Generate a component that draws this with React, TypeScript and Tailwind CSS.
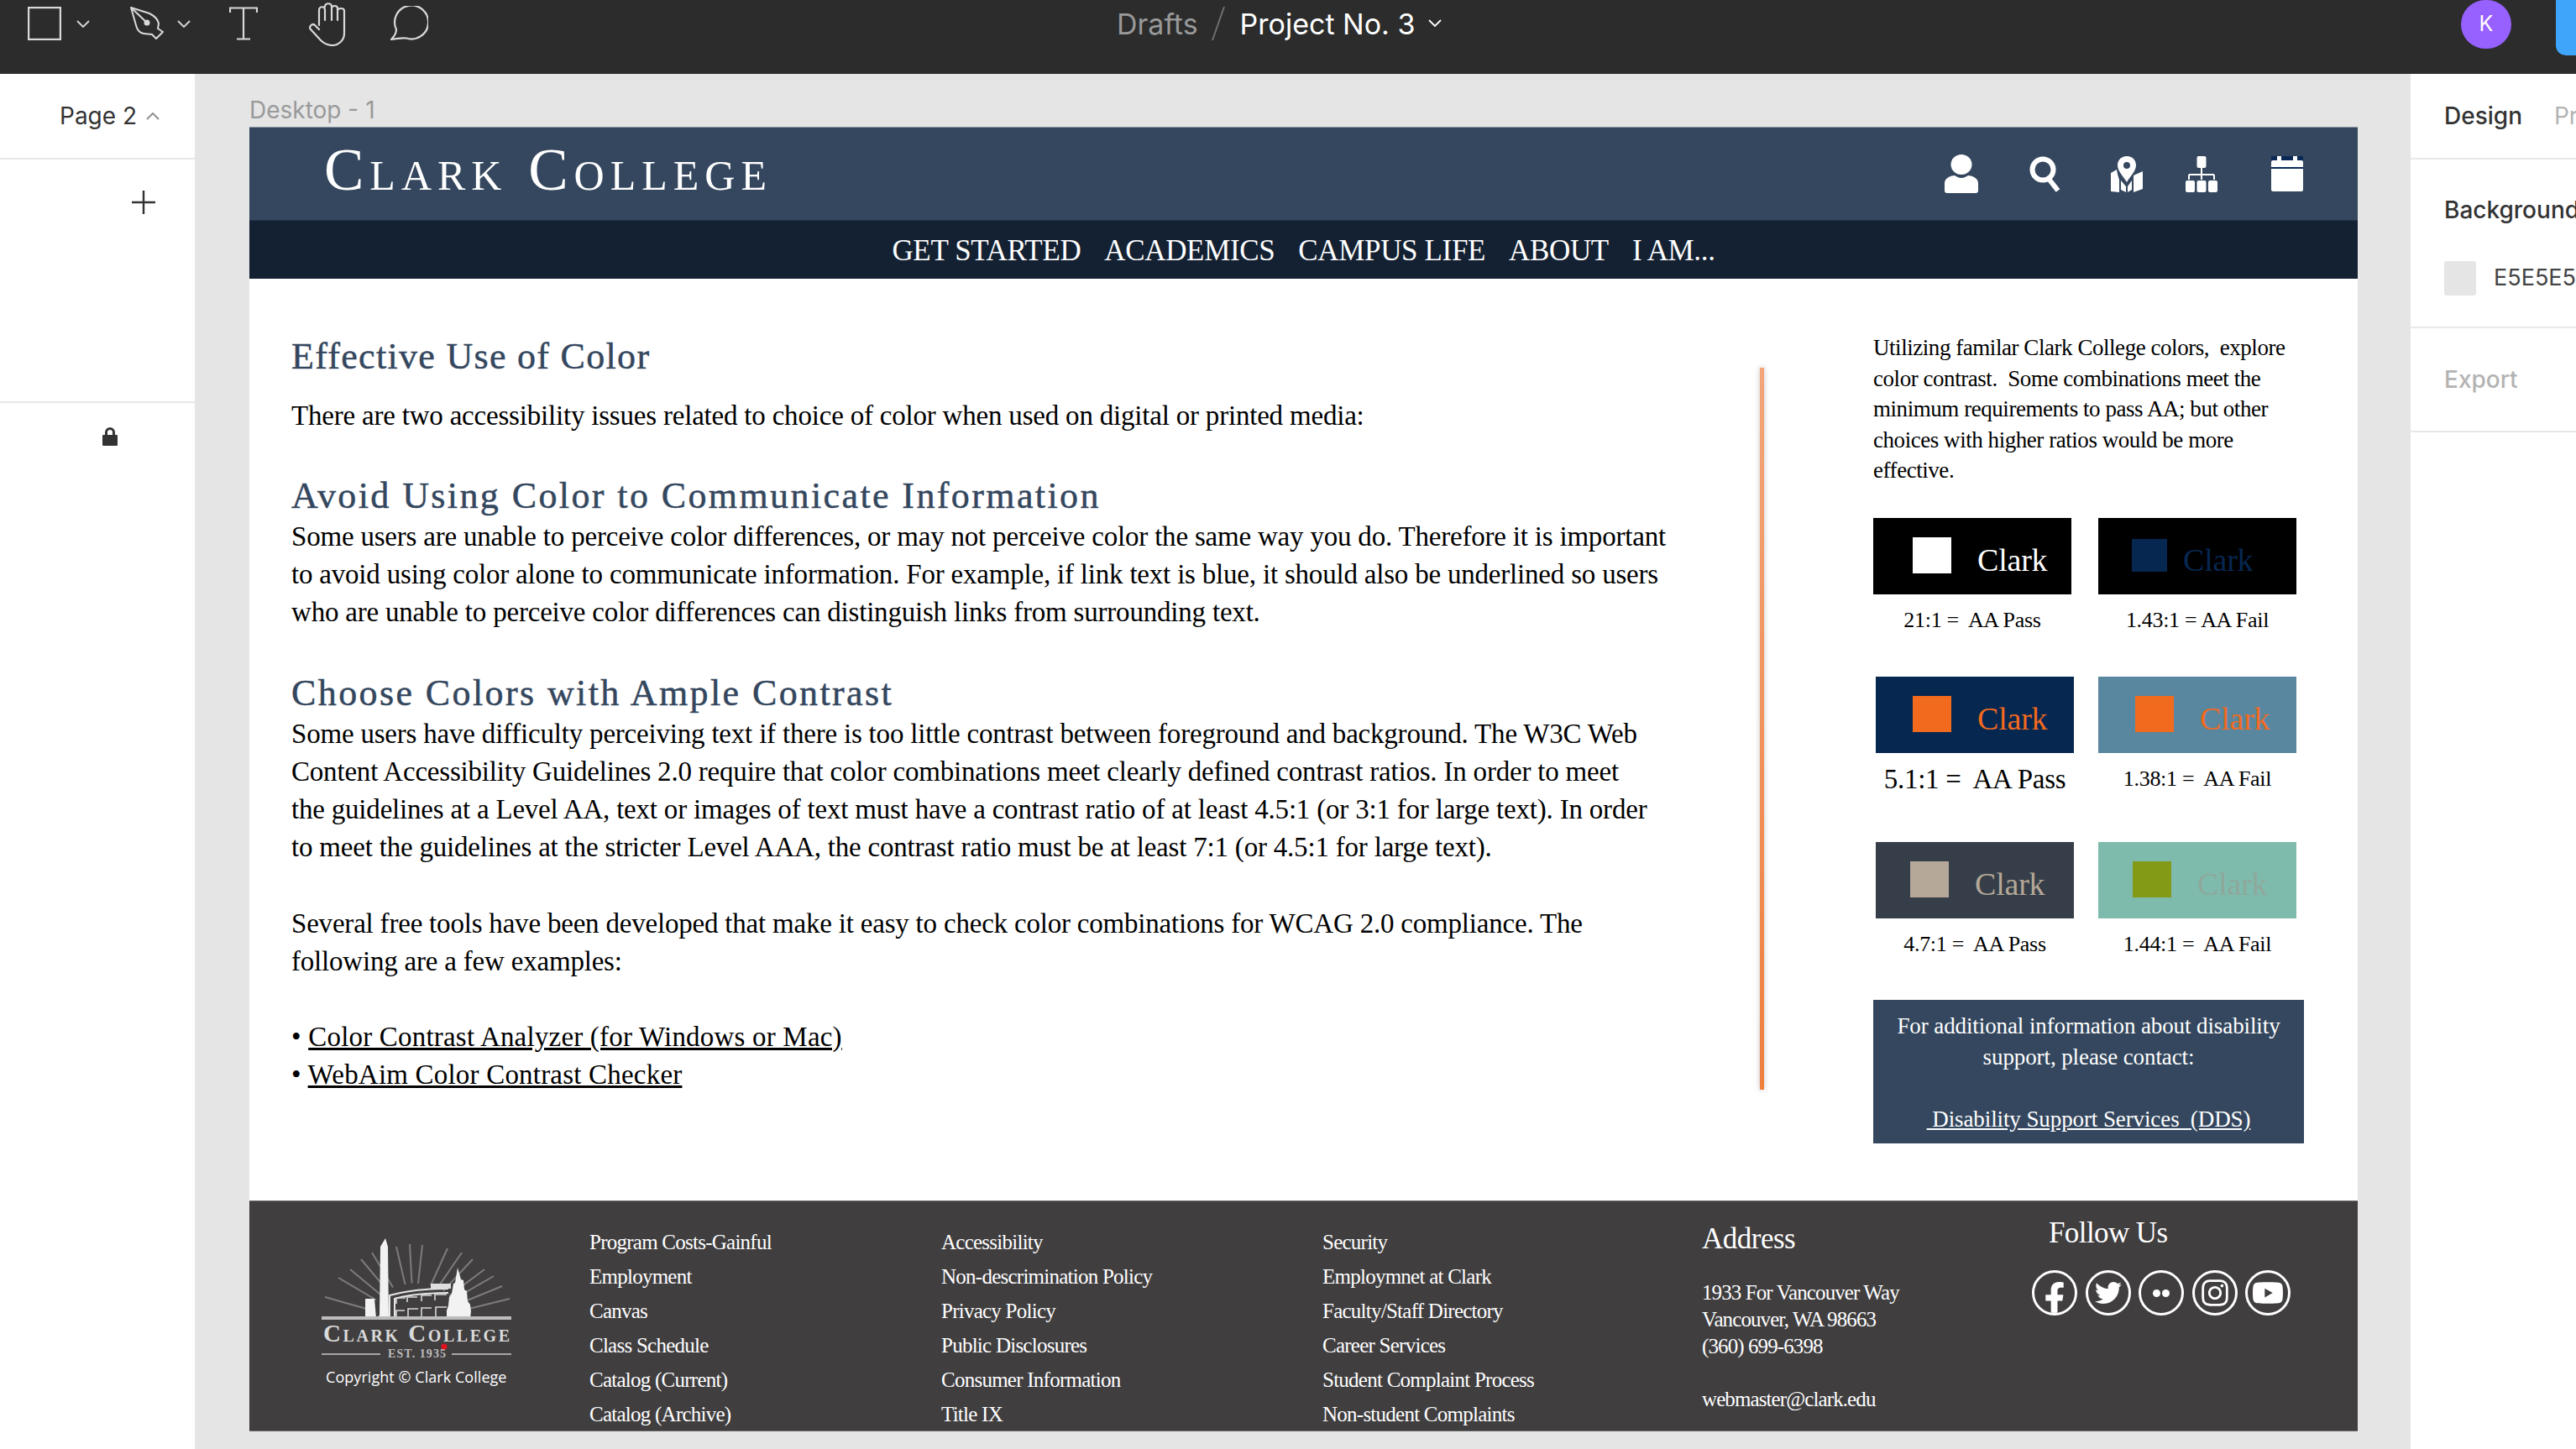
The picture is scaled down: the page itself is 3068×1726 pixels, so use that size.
import { FaFacebookF, FaInstagram, FaTwitter, FaYoutube } from "react-icons/fa";

const serif = "font-['Liberation_Serif',serif]";

const leftLines = {
  intro: "There are two accessibility issues related to choice of color when used on digital or printed media:",
  avoid: [
    "Some users are unable to perceive color differences, or may not perceive color the same way you do. Therefore it is important",
    "to avoid using color alone to communicate information. For example, if link text is blue, it should also be underlined so users",
    "who are unable to perceive color differences can distinguish links from surrounding text.",
  ],
  contrast: [
    "Some users have difficulty perceiving text if there is too little contrast between foreground and background. The W3C Web",
    "Content Accessibility Guidelines 2.0 require that color combinations meet clearly defined contrast ratios. In order to meet",
    "the guidelines at a Level AA, text or images of text must have a contrast ratio of at least 4.5:1 (or 3:1 for large text). In order",
    "to meet the guidelines at the stricter Level AAA, the contrast ratio must be at least 7:1 (or 4.5:1 for large text).",
  ],
  tools: [
    "Several free tools have been developed that make it easy to check color combinations for WCAG 2.0 compliance. The",
    "following are a few examples:",
  ],
};

const footerCols = [
  { w: "w-[419px]", items: ["Program Costs-Gainful", "Employment", "Canvas", "Class Schedule", "Catalog (Current)", "Catalog (Archive)"] },
  { w: "w-[454px]", items: ["Accessibility", "Non-descrimination Policy", "Privacy Policy", "Public Disclosures", "Consumer Information", "Title IX"] },
  { w: "w-[452px]", items: ["Security", "Employmnet at Clark", "Faculty/Staff Directory", "Career Services", "Student Complaint Process", "Non-student Complaints"] },
];

// ends of the sunburst rays behind the logo
const logoRays = [
  [17, 80], [33, 57], [47, 47], [60, 35], [73, 27], [102, 20], [118, 17], [133, 18], [163, 22], [180, 27], [193, 35], [207, 47], [218, 55], [228, 67], [237, 82],
];

function Chevron({ up = false, className = "" }: { up?: boolean; className?: string }) {
  return (
    <svg width="16" height="10" viewBox="0 0 16 10" fill="none" stroke="currentColor" strokeWidth="1.8" className={`shrink-0 ${className}`}>
      <path d={up ? "M1 9l7-7 7 7" : "M1 1l7 7 7-7"} />
    </svg>
  );
}

function Toolbar() {
  return (
    <div className="flex shrink-0 items-start text-[#d9d9d9]">
      <svg width="40" height="40" viewBox="0 0 40 40" fill="none" stroke="currentColor" strokeWidth="2.2" className="ml-[33px] mt-[8px]">
        <rect x="1.1" y="1.1" width="37.8" height="37.8" />
      </svg>
      <Chevron className="ml-[18px] mt-[24px]" />
      <svg width="40" height="40" viewBox="0 0 40 40" fill="none" stroke="currentColor" strokeWidth="2" strokeLinejoin="round" className="ml-[48px] mt-[8px]">
        <path d="M1 1L23 8C29 11 33 15 34 20L33 26L39 30L31 38L26 33C22 32 17 33 13 31C9 29 8 26 7 22Z" />
        <path d="M1 1L20 19" />
        <circle cx="20" cy="19" r="3.500" fill="currentColor" stroke="none" />
      </svg>
      <Chevron className="ml-[16px] mt-[24px]" />
      <svg width="34" height="40" viewBox="0 0 34 40" fill="none" stroke="currentColor" strokeWidth="2.2" className="ml-[46px] mt-[8px]">
        <path d="M1 7V1.500h32V7M17 1.500V38M9 38.500h16" />
      </svg>
      <svg width="46" height="52" viewBox="0 0 46 52" fill="none" stroke="currentColor" strokeWidth="2.2" className="ml-[60px] mt-[3px]" strokeLinecap="round" strokeLinejoin="round">
        <path d="M13 27V9c0-5 7-5 7 0v12M20 5c0-5 8-5 8 0v16M28 7c0-4 7-4 7 0v14M35 10c0-4 8-4 8 0v27c0 8-7 14-14 14-6 0-10-2-14-6L3 32c-3-3 2-8 5-5l5 5" />
      </svg>
      <svg width="46" height="42" viewBox="0 0 46 42" fill="none" stroke="currentColor" strokeWidth="2.2" className="ml-[51px] mt-[7px]">
        <path d="M8 28A20 20 0 1 1 20 38.500C15 38 7 39 2 40c3-3 6-7 6-12z" strokeLinejoin="round" />
      </svg>
    </div>
  );
}

function TopBar() {
  return (
    <header className="flex h-[88px] w-full shrink-0 overflow-hidden bg-[#2c2c2c] font-['Inter',sans-serif]">
      <Toolbar />
      <div className="ml-[820px] flex h-[56px] items-center whitespace-nowrap text-[34px]">
        <span className="text-[#999999]">Drafts</span>
        <svg width="16" height="42" viewBox="0 0 16 42" className="ml-[16px] shrink-0 text-[#6f6f6f]" stroke="currentColor" strokeWidth="2">
          <path d="M15 1L1 41" />
        </svg>
        <span className="ml-[18px] text-white">Project No. 3</span>
        <Chevron className="ml-[16px] text-white" />
      </div>
      <div className="ml-auto flex shrink-0 items-start">
        <div className="flex h-[58px] w-[60px] items-center justify-center rounded-full bg-[#9761ff] text-[25px] text-white">K</div>
        <div className="ml-[53px] h-[66px] w-[24px] rounded-bl-[12px] bg-[#3fa5fb]" />
      </div>
    </header>
  );
}

function LeftSidebar() {
  return (
    <aside className="flex w-[232px] shrink-0 flex-col bg-white font-['Inter',sans-serif]">
      <div className="flex h-[102px] shrink-0 items-center border-b-[2px] border-[#e8e8e8] pl-[71px] text-[28px] text-[#333333]">
        Page 2
        <Chevron up className="ml-[11px] text-[#8a8a8a]" />
      </div>
      <div className="h-[290px] shrink-0 border-b-[2px] border-[#e8e8e8] pl-[157px] pt-[37px]">
        <svg width="28" height="28" viewBox="0 0 28 28" stroke="#333333" strokeWidth="2.4">
          <path d="M14 0v28M0 14h28" />
        </svg>
      </div>
      <div className="pl-[122px] pt-[29px]">
        <svg width="18" height="22" viewBox="0 0 18 22" fill="#333333">
          <path d="M3 9V6a6 6 0 0 1 12 0v3h2a1 1 0 0 1 1 1v11a1 1 0 0 1-1 1H1a1 1 0 0 1-1-1V10a1 1 0 0 1 1-1zm3 0h6V6a3 3 0 0 0-6 0z" />
        </svg>
      </div>
    </aside>
  );
}

function RightPanel() {
  return (
    <aside className="w-[197px] shrink-0 overflow-hidden whitespace-nowrap bg-white font-['Inter',sans-serif]">
      <div className="flex h-[102px] items-center border-b-[2px] border-[#e8e8e8] pl-[40px] text-[28px] font-medium text-[#333333]">
        Design
        <span className="ml-[38px] font-normal text-[#b3b3b3]">Prototype</span>
      </div>
      <div className="h-[201px] border-b-[2px] border-[#e8e8e8] pl-[40px] pt-[43px]">
        <div className="text-[28px] font-medium leading-[34px] text-[#333333]">Background</div>
        <div className="mt-[44px] flex items-center">
          <div className="h-[41px] w-[40px] rounded-[3px] bg-[#e5e5e5]" />
          <span className="ml-[21px] text-[27px] text-[#444444]">E5E5E5</span>
        </div>
      </div>
      <div className="h-[124px] border-b-[2px] border-[#e8e8e8] pl-[40px] pt-[44px] text-[28px] font-medium leading-[34px] text-[#b3b3b3]">Export</div>
    </aside>
  );
}

function PersonIcon() {
  return (
    <svg width="40" height="46" viewBox="0 0 40 46" fill="white">
      <ellipse cx="20" cy="12" rx="12.500" ry="12" />
      <path d="M0 43V34c0-6 8-9 12-9 2 1.500 5 3 8 3s6-1.500 8-3c4 0 12 3 12 9v9c0 2-1 3-3 3H3c-2 0-3-1-3-3z" />
    </svg>
  );
}

function SearchIcon() {
  return (
    <svg width="40" height="43" viewBox="0 0 40 43" fill="none" stroke="white">
      <circle cx="16" cy="16" r="12.500" strokeWidth="6" />
      <path d="M23 27l11 14" strokeWidth="6" />
    </svg>
  );
}

function MapIcon() {
  return (
    <svg width="38" height="43" viewBox="0 0 38 43" fill="white">
      <path fillRule="evenodd" d="M19 0c-7 0-11 5-11 11 0 7 7 13 11 20 4-7 11-13 11-20 0-6-4-11-11-11zm0 7a4 4 0 1 1 0 8 4 4 0 0 1 0-8z" />
      <path d="M0 20l7-4c1 6 2 9 3 12v15l-10-1zM12 29l6 7v7l-6-3zM20 36l5-7v11l-5 3zM27 23l11-5v21l-11 4z" />
    </svg>
  );
}

function SitemapIcon() {
  return (
    <svg width="38" height="43" viewBox="0 0 38 43" fill="white">
      <rect x="13.500" width="11" height="14" rx="2" />
      <rect x="0" y="29" width="11" height="14" rx="2" />
      <rect x="13.500" y="29" width="11" height="14" rx="2" />
      <rect x="27" y="29" width="11" height="14" rx="2" />
      <path d="M18 14h2v7h13c1 0 2 1 2 2v5h-2v-5H20v5h-2v-5H5v5H3v-5c0-1 1-2 2-2h13z" />
    </svg>
  );
}

function CalendarIcon() {
  return (
    <svg width="38" height="43" viewBox="0 0 38 43">
      <rect width="38" height="15" fill="#0a2a55" />
      <path fill="white" d="M7 0h5v5h14V0h5v5h5a2 2 0 0 1 2 2v6H0V7a2 2 0 0 1 2-2h5zM0 15h38v25a2 2 0 0 1-2 2H2a2 2 0 0 1-2-2z" />
    </svg>
  );
}

function SiteHeader() {
  return (
    <div className={`flex h-[111px] items-center border-t-[1px] border-[#8d97a3] bg-[#34475e] pl-[89px] text-white ${serif}`}>
      <div className="-mt-[9px] flex w-[1930px] items-baseline whitespace-nowrap text-[71px] leading-none tracking-[7px] [font-variant:small-caps]">
        Clark College
      </div>
      <div className="flex items-center">
        <PersonIcon />
        <div className="ml-[61px]"><SearchIcon /></div>
        <div className="ml-[57px]"><MapIcon /></div>
        <div className="ml-[51px]"><SitemapIcon /></div>
        <div className="ml-[64px]"><CalendarIcon /></div>
      </div>
    </div>
  );
}

function SiteNav() {
  return (
    <nav className={`flex h-[70px] items-center justify-center whitespace-nowrap border-t-[1px] border-[#22344a] bg-[#142132] pt-[3px] text-[35px] tracking-[-0.35px] text-white ${serif}`}>
      <span>GET STARTED</span>
      <span className="ml-[28px]">ACADEMICS</span>
      <span className="ml-[28px]">CAMPUS LIFE</span>
      <span className="ml-[28px]">ABOUT</span>
      <span className="ml-[28px]">I AM...</span>
    </nav>
  );
}

function Heading({ children, className = "" }: { children: React.ReactNode; className?: string }) {
  return <h2 className={`text-[44px] leading-[52px] tracking-[2.4px] text-[#34475e] [-webkit-text-stroke:0.5px_#34475e] ${className}`}>{children}</h2>;
}

function Lines({ lines, className = "" }: { lines: string[]; className?: string }) {
  return (
    <div className={className}>
      {lines.map((l) => (
        <p key={l} className="h-[45px] leading-[45px]">{l}</p>
      ))}
    </div>
  );
}

function Article() {
  return (
    <div className="w-[1799px] shrink-0 whitespace-nowrap pl-[50px] pt-[67px] text-[33px] tracking-[-0.2px] text-black">
      <Heading className="!tracking-[1.3px]">Effective Use of Color</Heading>
      <p className="mt-[22px] h-[45px] leading-[45px]">{leftLines.intro}</p>
      <Heading className="mt-[47px]">Avoid Using Color to Communicate Information</Heading>
      <Lines lines={leftLines.avoid} />
      <Heading className="mt-[48px]">Choose Colors with Ample Contrast</Heading>
      <Lines lines={leftLines.contrast} />
      <Lines lines={leftLines.tools} className="mt-[46px]" />
      <div className="mt-[45px] tracking-[0.2px]">
        <p className="h-[45px] leading-[45px]">• <a className="underline">Color Contrast Analyzer (for Windows or Mac)</a></p>
        <p className="h-[45px] leading-[45px]">• <a className="underline">WebAim Color Contrast Checker</a></p>
      </div>
    </div>
  );
}

type SwatchProps = {
  bg: string;
  square: string;
  text: string;
  label: string;
  pad?: string;
  squareSize?: string;
  gap?: string;
  labelClass?: string;
  className?: string;
};

function Swatch({
  bg,
  square,
  text,
  label,
  pad = "pl-[47px]",
  squareSize = "h-[43px] w-[46px]",
  gap = "ml-[31px]",
  labelClass = "text-[26px]",
  className = "",
}: SwatchProps) {
  return (
    <div className={`w-[236px] shrink-0 ${className}`}>
      <div className={`flex h-[91px] items-center ${pad} ${bg}`}>
        <div className={`shrink-0 -translate-y-[1px] ${squareSize} ${square}`} />
        <span className={`${gap} translate-y-[5px] text-[38px] leading-none tracking-[-0.2px] ${text}`}>Clark</span>
      </div>
      <div className={`mt-[13px] h-[35px] whitespace-pre text-center leading-[36px] tracking-[-0.3px] text-black ${labelClass}`}>{label}</div>
    </div>
  );
}

function Sidebar() {
  return (
    <div className="ml-[130px] w-[513px] shrink-0">
      <div className="whitespace-nowrap pt-[64px] text-[27px] leading-[36.6px] tracking-[-0.45px] text-black">
        <p>Utilizing familar Clark College colors,&nbsp; explore</p>
        <p>color contrast.&nbsp; Some combinations meet the</p>
        <p>minimum requirements to pass AA; but other</p>
        <p>choices with higher ratios would be more</p>
        <p>effective.</p>
      </div>
      <div className="mt-[38px] flex">
        <Swatch bg="bg-black" square="bg-white" text="text-white" label="21:1 =  AA Pass" />
        <Swatch className="ml-[32px]" bg="bg-black" square="bg-[#062750]" text="text-[#062750]" label="1.43:1 = AA Fail" pad="pl-[40px]" squareSize="h-[39px] w-[42px]" gap="ml-[19px]" />
      </div>
      <div className="mt-[50px] flex">
        <Swatch className="ml-[3px]" bg="bg-[#062750]" square="bg-[#f26a1e]" text="text-[#f26a1e]" label="5.1:1 =  AA Pass" labelClass="text-[33px]" pad="pl-[44px]" />
        <Swatch className="ml-[29px]" bg="bg-[#5a87a0]" square="bg-[#f26a1e]" text="text-[#f26a1e]" label="1.38:1 =  AA Fail" pad="pl-[44px]" />
      </div>
      <div className="mt-[58px] flex">
        <Swatch className="ml-[3px]" bg="bg-[#363f49]" square="bg-[#b5a898]" text="text-[#b5a898]" label="4.7:1 =  AA Pass" pad="pl-[41px]" />
        <Swatch className="ml-[29px]" bg="bg-[#7fbbad]" square="bg-[#839a17]" text="text-[#8ea89b]" label="1.44:1 =  AA Fail" pad="pl-[41px]" />
      </div>
      <div className="mt-[49px] h-[171px] whitespace-nowrap bg-[#34475e] pt-[13px] text-center text-[27px] leading-[37px] tracking-[-0.1px] text-white">
        <p>For additional information about disability</p>
        <p>support, please contact:</p>
        <p className="mt-[37px]"><a className="underline">&nbsp;Disability Support Services &nbsp;(DDS)</a></p>
      </div>
    </div>
  );
}

function CollegeLogo() {
  return (
    <svg width="250" height="157" viewBox="0 0 250 157" className="block">
      {logoRays.map(([x, y]) => (
        <line key={x} x1={123 + (x - 123) * 0.5} y1={110 + (y - 110) * 0.5} x2={x} y2={y} stroke="#7d7c7c" strokeWidth="2" />
      ))}
      <path fill="#f2f2f2" d="M76 105l6-3 1-82 6-10 3 10 1 85zM65 105V82h11l2 23z" />
      <path fill="none" stroke="#e6e6e6" strokeWidth="2" d="M94 105V78C115 72 140 70 164 70M100 105V82C118 77 140 75 164 75" />
      <path fill="none" stroke="#d8d8d8" strokeWidth="1.600" d="M102 88V81h11M115 86V80h12M132 85V78h12M148 84V77h14M102 105V96h10M116 105V94h12M132 105V93h12M149 105V92h13" />
      <path fill="#dedede" d="M143 70v-6h24v6z" />
      <path fill="#f2f2f2" d="M175 45l4 14 3 1 1 11 3 2 1 12 3 4 1 8 -1 9h-28l0-10 2-6 1-10 3-4 2-12 2-1z" />
      <rect x="13" y="103" width="226" height="4" fill="#bdbcbc" />
      <text x="15" y="133" textLength="222" fontSize="29" fontWeight="700" fill="#d9d9d9" fontFamily="Liberation Serif, serif" style={{ fontVariant: "small-caps" }}>
        Clark College
      </text>
      <rect x="13" y="147" width="70" height="2" fill="#a8a7a7" />
      <rect x="168" y="147" width="71" height="2" fill="#a8a7a7" />
      <text x="92" y="152" textLength="69" fontSize="14" fontWeight="700" fill="#bdbcbc" fontFamily="Liberation Serif, serif">EST. 1935</text>
      <circle cx="159" cy="139" r="3.500" fill="#e0141f" />
    </svg>
  );
}

function SocialIcon({ children, className = "" }: { children: React.ReactNode; className?: string }) {
  return (
    <div className={`flex h-[54px] w-[54px] shrink-0 items-center justify-center overflow-hidden rounded-full border-[3px] border-white text-white ${className}`}>
      {children}
    </div>
  );
}

function SiteFooter() {
  return (
    <footer className={`flex h-[275px] overflow-hidden border-y-[1px] border-[#6d6c6c] bg-[#403e3f] text-white ${serif}`}>
      <div className="ml-[73px] w-[332px] shrink-0 pt-[34px]">
        <CollegeLogo />
        <p className="ml-[18px] mt-[6px] whitespace-nowrap font-['Open_Sans',sans-serif] text-[18px] leading-[24px] tracking-[0.05px]">Copyright © Clark College</p>
      </div>
      {footerCols.map((col) => (
        <div key={col.items[0]} className={`${col.w} shrink-0 whitespace-nowrap pt-[28px] text-[25px] leading-[41px] tracking-[-0.75px]`}>
          {col.items.map((item) => (
            <p key={item}>{item}</p>
          ))}
        </div>
      ))}
      <div className="w-[400px] shrink-0 whitespace-nowrap pt-[23px] text-[25px] leading-[32px] tracking-[-0.9px]">
        <h3 className="text-[35px] leading-[44px] tracking-[-0.5px]">Address</h3>
        <p className="mt-[26px]">1933 For Vancouver Way</p>
        <p>Vancouver, WA 98663</p>
        <p>(360) 699-6398</p>
        <p className="mt-[31px]">webmaster@clark.edu</p>
      </div>
      <div className="-ml-[7px]">
        <h3 className="ml-[20px] mt-[16px] whitespace-nowrap text-[35px] leading-[44px] tracking-[-0.6px]">Follow Us</h3>
        <div className="mt-[22px] flex gap-[9.5px]">
          <SocialIcon><FaFacebookF className="mt-[14px] h-[40px] w-[34px]" /></SocialIcon>
          <SocialIcon><FaTwitter className="h-[32px] w-[32px]" /></SocialIcon>
          <SocialIcon>
            <div className="flex gap-[2px]">
              <span className="h-[9px] w-[9px] rounded-full bg-white" />
              <span className="h-[9px] w-[9px] rounded-full bg-white" />
            </div>
          </SocialIcon>
          <SocialIcon><FaInstagram className="h-[36px] w-[36px]" /></SocialIcon>
          <SocialIcon><FaYoutube className="h-[38px] w-[38px]" /></SocialIcon>
        </div>
      </div>
    </footer>
  );
}

function Canvas() {
  return (
    <main className="w-[2639px] shrink-0 overflow-hidden bg-[#e5e5e5] pl-[65px] font-['Inter',sans-serif]">
      <div className="h-[63px] pt-[28px] text-[28px] leading-[30px] text-[#999999]">Desktop - 1</div>
      <div className="w-[2511px]">
        <SiteHeader />
        <SiteNav />
        <div className={`flex h-[1098px] bg-white ${serif}`}>
          <Article />
          <div className="mt-[106px] h-[860px] w-[5px] shrink-0 bg-gradient-to-b from-[#f3a578] to-[#ee7f3d] shadow-[0_0_6px_rgba(120,120,120,0.45)]" />
          <Sidebar />
        </div>
        <SiteFooter />
      </div>
    </main>
  );
}

export default function App() {
  return (
    <div className="flex h-[1726px] w-[3068px] flex-col overflow-hidden bg-[#e5e5e5]">
      <TopBar />
      <div className="flex min-h-0 flex-1">
        <LeftSidebar />
        <Canvas />
        <RightPanel />
      </div>
    </div>
  );
}
